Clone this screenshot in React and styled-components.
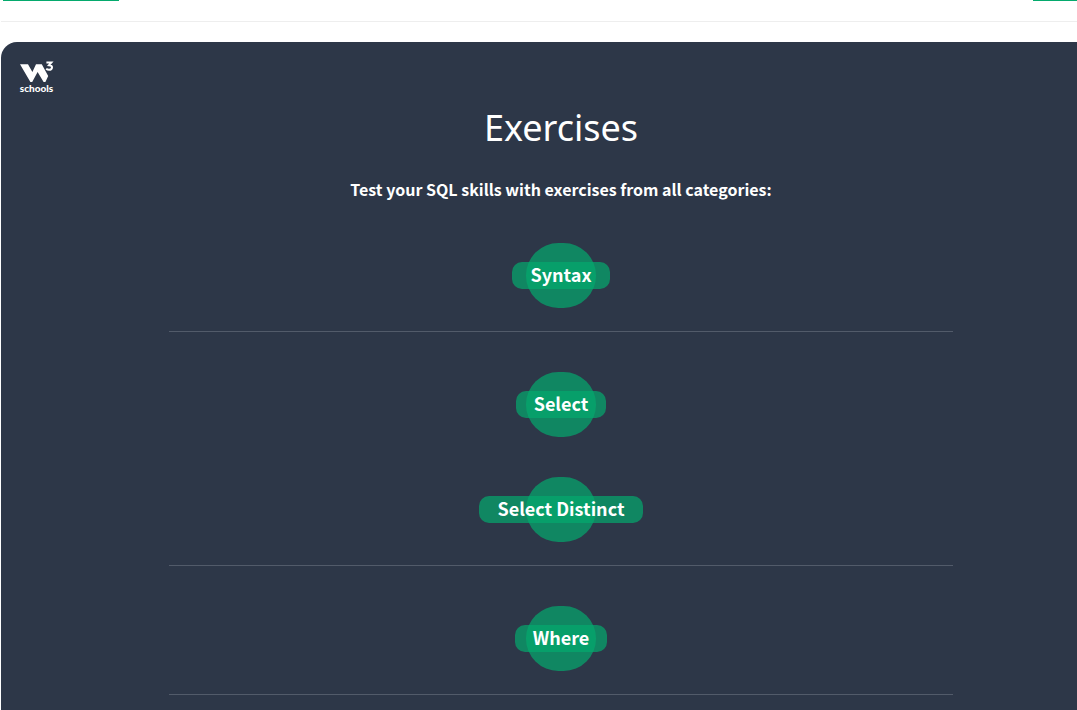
import React from "react";
import styled, { createGlobalStyle } from "styled-components";

const GlobalStyle = createGlobalStyle`
  *, *::before { box-sizing: border-box; }
  body {
    margin: 0;
    overflow: hidden;
    background: #fff;
    color: #fff;
    font-family: "Noto Sans CJK SC", "Noto Sans", sans-serif;
  }
`;

const Page = styled.div`
  height: 100vh;
  overflow: hidden;
  padding-left: 1px;
`;

/* The page column is wider than the window and runs off its right side. */
const Column = styled.main`
  width: calc(100% + 44px);
`;

const PagerEdge = styled.div`
  display: flex;
  justify-content: space-between;
  padding: 0 2px;
`;

const PagerBar = styled.div`
  width: ${(p) => p.$width}px;
  height: 1px;
  background: #04aa6d;
`;

const Rule = styled.hr`
  margin: 20px 0;
  border: 0;
  border-top: 1px solid #eee;
`;

const Panel = styled.section`
  position: relative;
  min-height: 100vh;
  padding-top: 60px;
  border-radius: 16px;
  background: #2d3748;
  text-align: center;
`;

const LogoLink = styled.a`
  position: absolute;
  top: 18px;
  left: 18px;
  display: block;
  line-height: 0;
`;

const Title = styled.h1`
  margin: 0;
  font-family: "Noto Sans", sans-serif;
  font-size: 36px;
  font-weight: 400;
  line-height: 52px;
`;

const Intro = styled.p`
  margin: 23px 0 0;
  padding-bottom: 2px;
  font-size: 16px;
  font-weight: 700;
  line-height: 24px;
`;

const Group = styled.div`
  display: grid;
  justify-items: center;
  gap: 40px;
  width: 70%;
  margin: 0 auto;
  padding: 40px 0 23px;
  border-bottom: 1px solid #525b6a;
`;

const ExerciseLink = styled.a`
  display: grid;
  place-items: center;
  color: #fff;
  text-decoration: none;

  &::before {
    content: "";
    grid-area: 1 / 1;
    width: 70px;
    height: 65px;
    border-radius: 50px;
    background: rgba(4, 170, 109, 0.7);
  }
`;

const Label = styled.span`
  grid-area: 1 / 1;
  padding: 0 18px 2px;
  border-radius: 10px;
  background: rgba(4, 170, 109, 0.7);
  font-size: 18px;
  font-weight: 700;
  line-height: 25px;
`;

const groups = [["Syntax"], ["Select", "Select Distinct"], ["Where"]];

function Logo() {
  return (
    <svg width="36" height="34" viewBox="0 0 36 34" fill="#fff" aria-hidden="true">
      <path d="M1 4.200H9L13.400 12L17 4.200H22.800L29.200 16L26.400 22H24.600L18.600 12L13.200 22H11.400Z" />
      <path
        d="M27.400 2.400H32.400L30 5.200Q33 5.400 33 7.300Q32.800 9.800 30 9.800Q28.400 9.800 27.200 8.800"
        fill="none"
        stroke="#fff"
        strokeWidth="2"
      />
      <text
        x="17.500"
        y="32"
        textAnchor="middle"
        fontFamily="Lato, sans-serif"
        fontWeight="900"
        fontSize="10"
      >
        schools
      </text>
    </svg>
  );
}

export default function App() {
  return (
    <Page>
      <GlobalStyle />
      <Column>
        <PagerEdge>
          <PagerBar $width={116} />
          <PagerBar $width={86} />
        </PagerEdge>
        <Rule />
        <Panel>
          <LogoLink href="#" aria-label="Home">
            <Logo />
          </LogoLink>
          <Title>Exercises</Title>
          <Intro>Test your SQL skills with exercises from all categories:</Intro>
          {groups.map((names) => (
            <Group key={names[0]}>
              {names.map((name) => (
                <ExerciseLink key={name} href="#">
                  <Label>{name}</Label>
                </ExerciseLink>
              ))}
            </Group>
          ))}
        </Panel>
      </Column>
    </Page>
  );
}
